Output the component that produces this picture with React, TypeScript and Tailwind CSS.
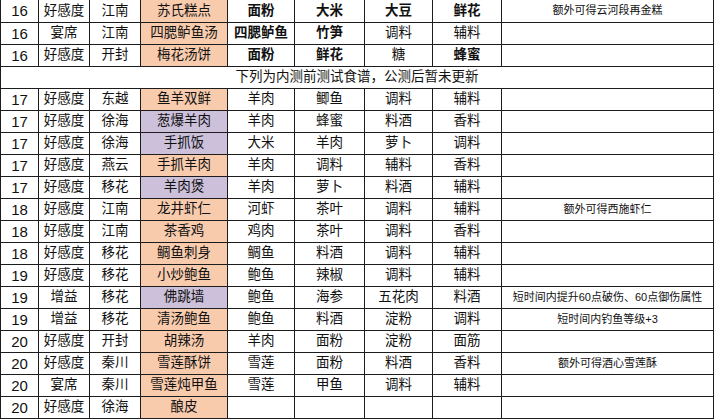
import React from 'react';

type Tint = 'o' | 'p';

interface Row {
  level: string;
  kind: string;
  region: string;
  dish: string;
  tint: Tint;
  items: string[];
  bold?: boolean[];
  note?: string;
}

const topRows: Row[] = [
  { level: '16', kind: '好感度', region: '江南', dish: '苏氏糕点', tint: 'o', items: ['面粉', '大米', '大豆', '鲜花'], bold: [true, true, true, true], note: '额外可得云河段再金糕' },
  { level: '16', kind: '宴席', region: '江南', dish: '四腮鲈鱼汤', tint: 'o', items: ['四腮鲈鱼', '竹笋', '调料', '辅料'], bold: [true, true, false, false] },
  { level: '16', kind: '好感度', region: '开封', dish: '梅花汤饼', tint: 'o', items: ['面粉', '鲜花', '糖', '蜂蜜'], bold: [true, true, false, true] },
];

const testRows: Row[] = [
  { level: '17', kind: '好感度', region: '东越', dish: '鱼羊双鲜', tint: 'o', items: ['羊肉', '鲫鱼', '调料', '辅料'] },
  { level: '17', kind: '好感度', region: '徐海', dish: '葱爆羊肉', tint: 'p', items: ['羊肉', '蜂蜜', '料酒', '香料'] },
  { level: '17', kind: '好感度', region: '徐海', dish: '手抓饭', tint: 'p', items: ['大米', '羊肉', '萝卜', '调料'] },
  { level: '17', kind: '好感度', region: '燕云', dish: '手抓羊肉', tint: 'o', items: ['羊肉', '调料', '辅料', '香料'] },
  { level: '17', kind: '好感度', region: '移花', dish: '羊肉煲', tint: 'p', items: ['羊肉', '萝卜', '料酒', '辅料'] },
  { level: '18', kind: '好感度', region: '江南', dish: '龙井虾仁', tint: 'o', items: ['河虾', '茶叶', '调料', '辅料'], note: '额外可得西施虾仁' },
  { level: '18', kind: '好感度', region: '江南', dish: '茶香鸡', tint: 'o', items: ['鸡肉', '茶叶', '调料', '香料'] },
  { level: '18', kind: '好感度', region: '移花', dish: '鲷鱼刺身', tint: 'o', items: ['鲷鱼', '料酒', '调料', '辅料'] },
  { level: '19', kind: '好感度', region: '移花', dish: '小炒鲍鱼', tint: 'o', items: ['鲍鱼', '辣椒', '调料', '辅料'] },
  { level: '19', kind: '增益', region: '移花', dish: '佛跳墙', tint: 'p', items: ['鲍鱼', '海参', '五花肉', '料酒'], note: '短时间内提升60点破伤、60点御伤属性' },
  { level: '19', kind: '增益', region: '移花', dish: '清汤鲍鱼', tint: 'o', items: ['鲍鱼', '料酒', '淀粉', '调料'], note: '短时间内钓鱼等级+3' },
  { level: '20', kind: '好感度', region: '开封', dish: '胡辣汤', tint: 'o', items: ['羊肉', '面粉', '淀粉', '面筋'] },
  { level: '20', kind: '好感度', region: '秦川', dish: '雪莲酥饼', tint: 'o', items: ['雪莲', '面粉', '料酒', '香料'], note: '额外可得酒心雪莲酥' },
  { level: '20', kind: '宴席', region: '秦川', dish: '雪莲炖甲鱼', tint: 'o', items: ['雪莲', '甲鱼', '调料', '辅料'] },
  { level: '20', kind: '好感度', region: '徐海', dish: '酿皮', tint: 'o', items: ['', '', '', ''] },
];

const cell = 'border border-[#1c1c1c] p-0 h-[22px] text-center align-middle whitespace-nowrap overflow-hidden';

const RecipeRow: React.FC<{ row: Row; first?: boolean }> = ({ row, first }) => {
  const c = first ? `${cell} border-t-0` : cell;
  return (
    <tr>
      <td className={`${c} text-[15px]`}>{row.level}</td>
      <td className={c}>{row.kind}</td>
      <td className={c}>{row.region}</td>
      <td className={`${c} ${row.tint === 'p' ? 'bg-[#ccc0da]' : 'bg-[#f8cbad]'}`}>{row.dish}</td>
      {row.items.map((item, i) => (
        <td key={i} className={`${c} ${row.bold?.[i] ? 'font-bold' : ''}`}>{item}</td>
      ))}
      <td className={`${c} text-[11px]`}>{row.note ?? ''}</td>
    </tr>
  );
};

export default function App() {
  return (
    <div className="w-[715px] h-[419px] bg-white overflow-hidden text-[#111] font-['Liberation_Sans','Noto_Sans_CJK_SC',sans-serif] text-[13.5px] leading-none">
      <table className="border-collapse table-fixed w-[713px]">
        <colgroup>
          <col className="w-[38px]" />
          <col className="w-[51px]" />
          <col className="w-[51px]" />
          <col className="w-[87px]" />
          <col className="w-[67px]" />
          <col className="w-[70px]" />
          <col className="w-[68px]" />
          <col className="w-[69px]" />
          <col className="w-[212px]" />
        </colgroup>
        <tbody>
          {topRows.map((row, i) => (
            <RecipeRow key={`t-${i}`} row={row} first={i === 0} />
          ))}
          <tr>
            <td colSpan={9} className={cell}>下列为内测前测试食谱，公测后暂未更新</td>
          </tr>
          {testRows.map((row, i) => (
            <RecipeRow key={`r-${i}`} row={row} />
          ))}
        </tbody>
      </table>
    </div>
  );
}
